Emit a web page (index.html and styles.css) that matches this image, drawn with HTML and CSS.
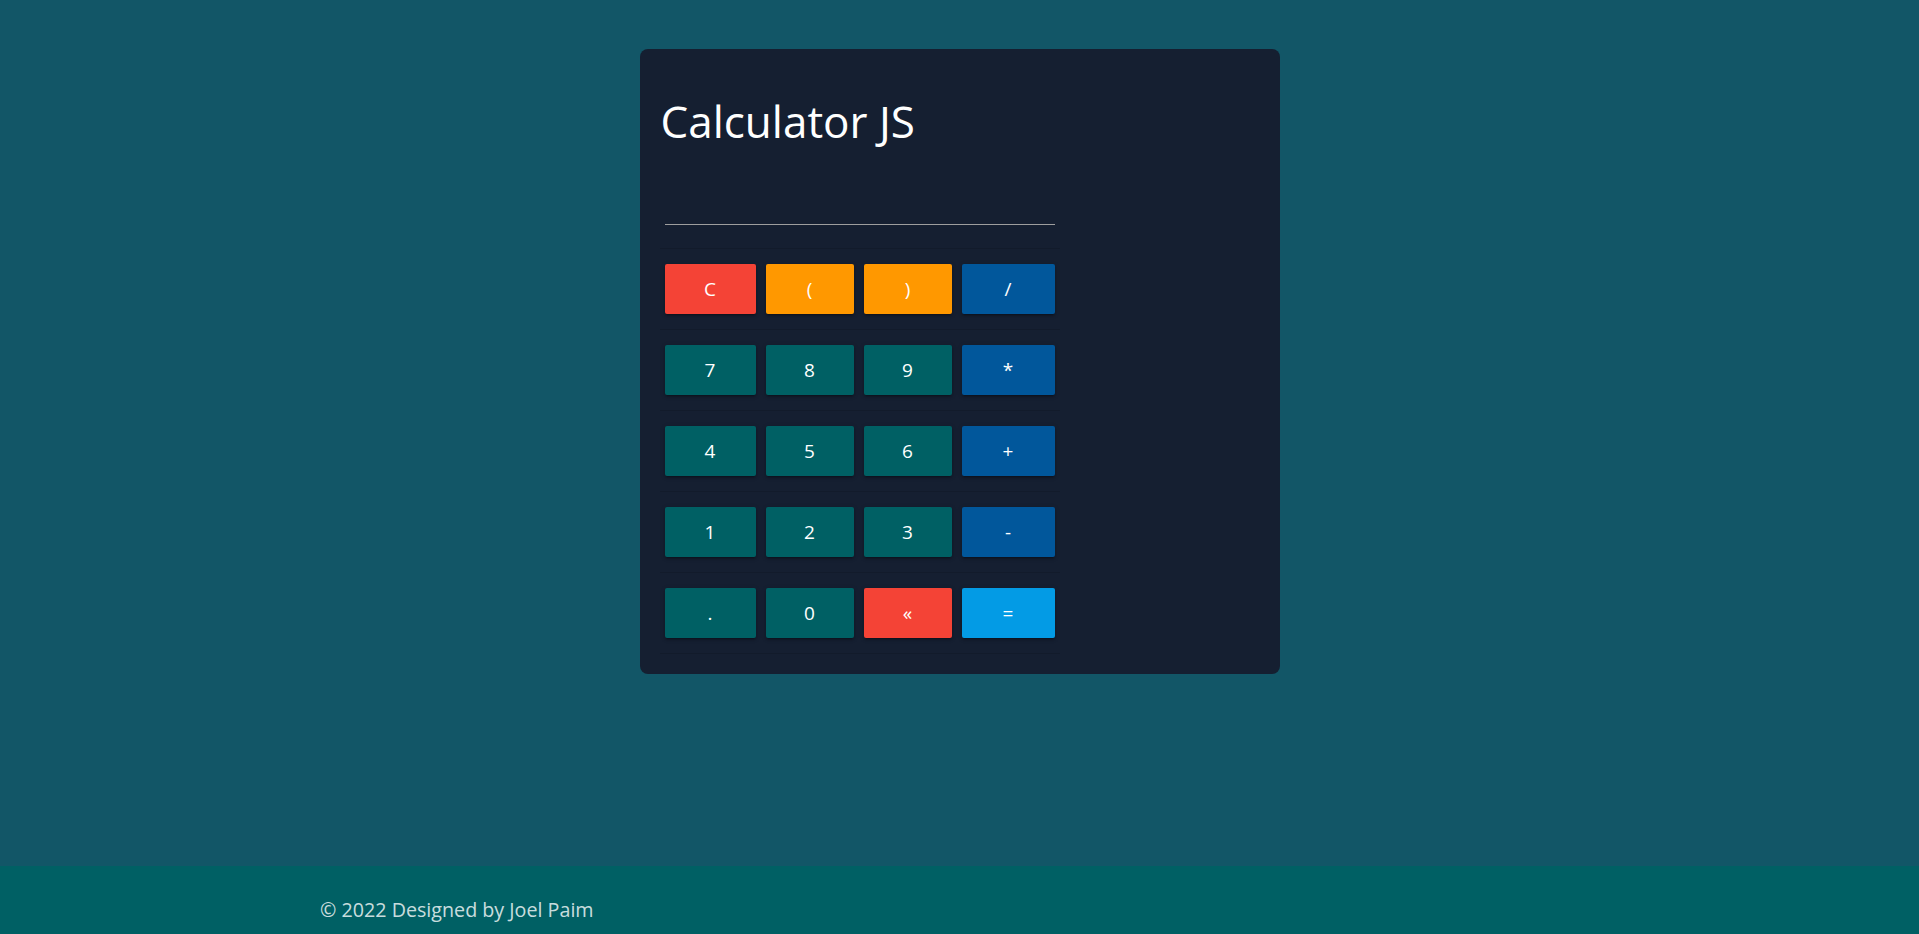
FILE: index.html
```html
<!DOCTYPE html>
<html lang="en">
<head>
<meta charset="utf-8">
<title>Calculator JS</title>
<link rel="stylesheet" href="styles.css">
</head>
<body>
<main class="main">
  <section class="card">
    <h1 class="title">Calculator JS</h1>
    <input class="display" type="text" readonly>
    <table class="keys">
      <colgroup>
        <col class="c1"><col class="c2"><col class="c3"><col class="c4">
      </colgroup>
      <tr>
        <td><button class="btn red">C</button></td>
        <td><button class="btn orange">(</button></td>
        <td><button class="btn orange">)</button></td>
        <td><button class="btn blue">/</button></td>
      </tr>
      <tr>
        <td><button class="btn teal">7</button></td>
        <td><button class="btn teal">8</button></td>
        <td><button class="btn teal">9</button></td>
        <td><button class="btn blue">*</button></td>
      </tr>
      <tr>
        <td><button class="btn teal">4</button></td>
        <td><button class="btn teal">5</button></td>
        <td><button class="btn teal">6</button></td>
        <td><button class="btn blue">+</button></td>
      </tr>
      <tr>
        <td><button class="btn teal">1</button></td>
        <td><button class="btn teal">2</button></td>
        <td><button class="btn teal">3</button></td>
        <td><button class="btn blue">-</button></td>
      </tr>
      <tr>
        <td><button class="btn teal">.</button></td>
        <td><button class="btn teal">0</button></td>
        <td><button class="btn red">&laquo;</button></td>
        <td><button class="btn light">=</button></td>
      </tr>
    </table>
  </section>
</main>
<footer class="footer">
  <p class="copy">&copy; 2022 Designed by Joel Paim</p>
</footer>
</body>
</html>
```

FILE: styles.css
```css
* { box-sizing: border-box; }
html, body { margin: 0; padding: 0; }
body {
  background: #125667;
  font-family: "Open Sans", "Noto Sans", sans-serif;
  color: #fff;
}
.main {
  height: 866px;
  padding-top: 49px;
  display: flex;
  justify-content: center;
  align-items: flex-start;
}
.card {
  width: 640px;
  background: #151f31;
  border-radius: 8px;
  padding: 48px 20px 20px 20px;
}
.title {
  margin: 0;
  font-size: 44px;
  line-height: 49px;
  font-weight: 400;
  color: #fff;
  padding-left: 1px;
}
.display {
  display: block;
  width: 390px;
  height: 49px;
  margin: 30px 0 0 5px;
  padding: 0;
  background: transparent;
  border: none;
  border-bottom: 1px solid #9e9e9e;
  outline: none;
  color: #fff;
  font-family: inherit;
  font-size: 18px;
}
.keys {
  margin-top: 23px;
  width: 400px;
  border-collapse: collapse;
  table-layout: fixed;
  border-top: 1px solid rgba(0, 0, 0, 0.12);
}
.keys tr { border-bottom: 1px solid rgba(0, 0, 0, 0.12); }
.keys td { padding: 15px 5px; }
.c1 { width: 101px; }
.c2 { width: 98px; }
.c3 { width: 98px; }
.c4 { width: 103px; }
.btn {
  display: block;
  width: 100%;
  height: 50px;
  border: none;
  border-radius: 2px;
  color: #fff;
  font-family: "Open Sans", "Noto Sans", sans-serif;
  font-size: 19px;
  padding: 0;
  cursor: pointer;
  box-shadow: 0 2px 2px 0 rgba(0,0,0,.14), 0 3px 1px -2px rgba(0,0,0,.12), 0 1px 5px 0 rgba(0,0,0,.2);
}
.red { background: #f44336; }
.orange { background: #ff9800; }
.blue { background: #01579b; }
.teal { background: #006064; }
.light { background: #039be5; }
.footer {
  background: #006064;
  height: 68px;
  padding-left: 320px;
  padding-top: 31px;
}
.copy {
  margin: 0;
  font-size: 19.7px;
  line-height: 26px;
  color: rgba(255, 255, 255, 0.8);
}
```
